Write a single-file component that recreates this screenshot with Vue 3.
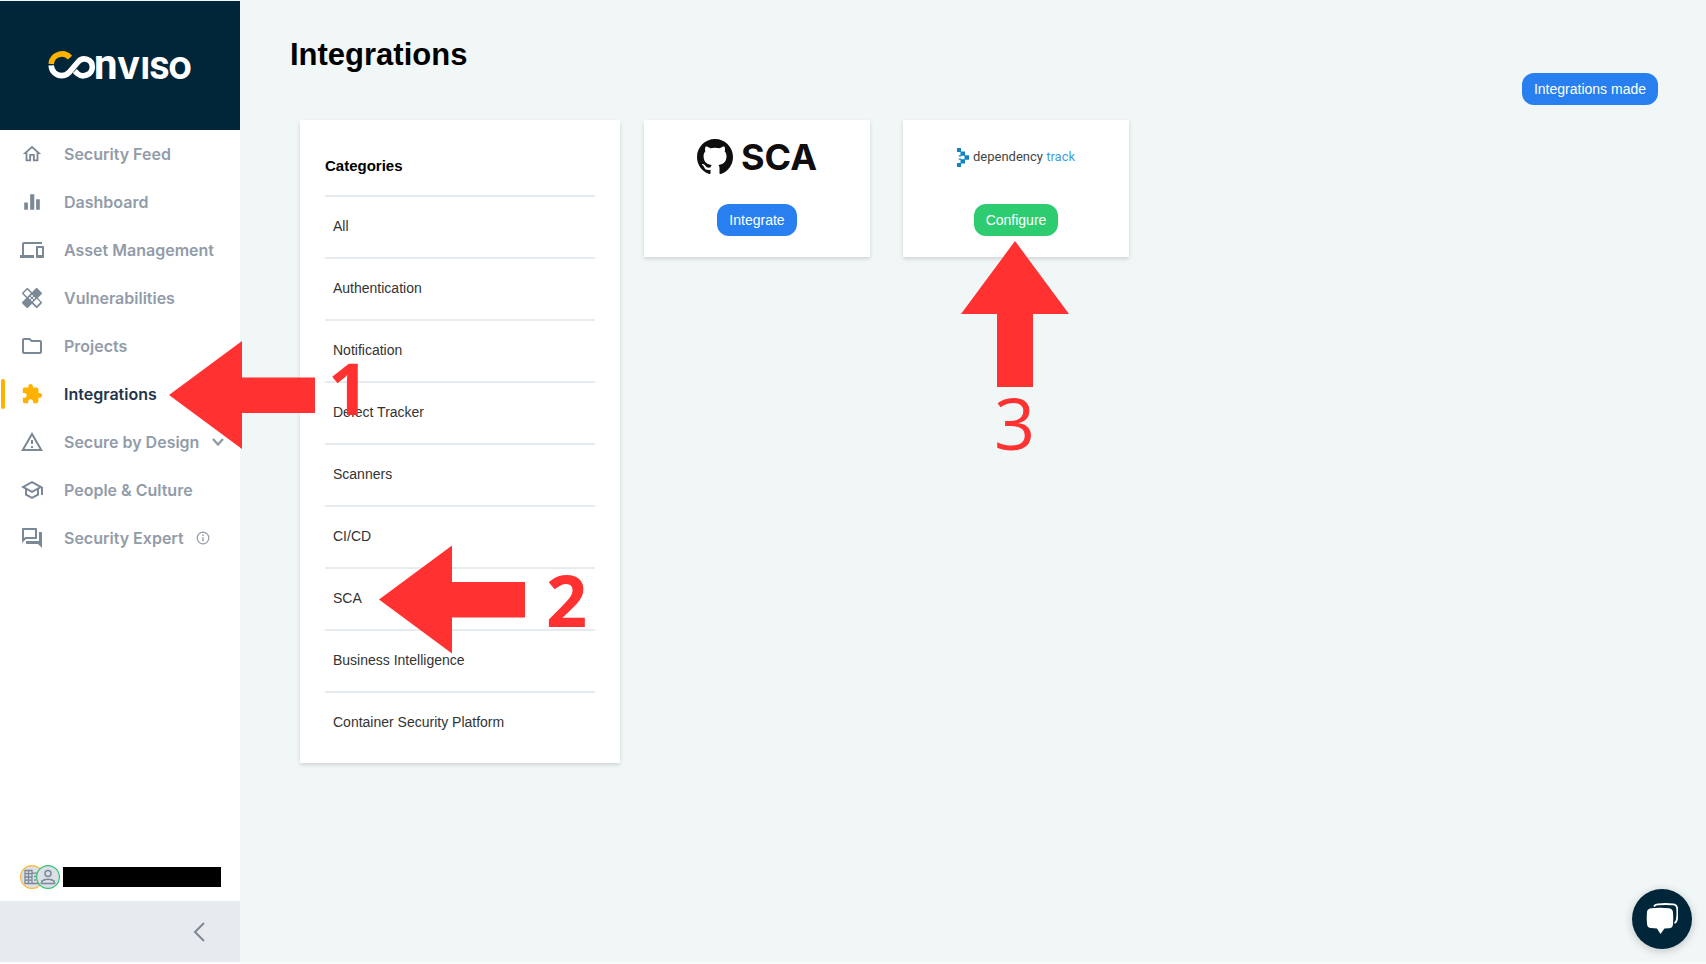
<script setup>
const navItems = [
  { label: 'Security Feed', icon: 'home' },
  { label: 'Dashboard', icon: 'chart' },
  { label: 'Asset Management', icon: 'devices' },
  { label: 'Vulnerabilities', icon: 'healing' },
  { label: 'Projects', icon: 'folder' },
  { label: 'Integrations', icon: 'puzzle', active: true },
  { label: 'Secure by Design', icon: 'warning', expandable: true },
  { label: 'People & Culture', icon: 'school' },
  { label: 'Security Expert', icon: 'forum', info: true },
]

const icons = {
  home: 'M12 5.69l5 4.5V18h-2v-6H9v6H7v-7.81l5-4.5M12 3L2 12h3v8h6v-6h2v6h6v-8h3L12 3z',
  chart: 'M3.5 12.5h4v8h-4zM10 3.5h4.500v17H10zM16.500 9h4v11.500h-4z',
  devices: 'M4 6h18V4H4c-1.100 0-2 .9-2 2v11H0v3h14v-3H4V6zm19 2h-6c-.55 0-1 .45-1 1v10c0 .55.45 1 1 1h6c.55 0 1-.45 1-1V9c0-.55-.45-1-1-1zm-1 9h-4v-7h4v7z',
  folder: 'M9.170 6l2 2H20v10H4V6h5.170M10 4H4c-1.100 0-1.990.9-1.990 2L2 18c0 1.100.9 2 2 2h16c1.100 0 2-.9 2-2V8c0-1.100-.9-2-2-2h-8l-2-2z',
  healing: 'M17.730 12.020l3.980-3.980c.39-.39.39-1.020 0-1.410l-4.340-4.340c-.39-.39-1.020-.39-1.410 0l-3.980 3.980L8 2.290C7.800 2.100 7.550 2 7.290 2c-.25 0-.51.1-.7.290L2.250 6.630c-.39.39-.39 1.020 0 1.410l3.980 3.980L2.250 16c-.39.39-.39 1.020 0 1.410l4.340 4.340c.39.39 1.020.39 1.410 0l3.980-3.980 3.980 3.980c.2.2.45.29.71.29.26 0 .51-.1.710-.29l4.340-4.340c.39-.39.39-1.020 0-1.410l-3.990-3.980zM12 9c.55 0 1 .45 1 1s-.45 1-1 1-1-.45-1-1 .45-1 1-1zm-4.710 1.960L3.660 7.340l3.630-3.630 3.620 3.620-3.620 3.630zM10 13c-.55 0-1-.45-1-1s.45-1 1-1 1 .45 1 1-.45 1-1 1zm2 2c-.55 0-1-.45-1-1s.45-1 1-1 1 .45 1 1-.45 1-1 1zm2-4c.55 0 1 .45 1 1s-.45 1-1 1-1-.45-1-1 .45-1 1-1z',
  puzzle: 'M20.500 11H19V7c0-1.100-.9-2-2-2h-4V3.500C13 2.120 11.880 1 10.500 1S8 2.120 8 3.500V5H4c-1.100 0-1.990.9-1.990 2v3.800H3.500c1.490 0 2.700 1.210 2.700 2.700s-1.210 2.700-2.700 2.700H2V20c0 1.100.9 2 2 2h3.800v-1.500c0-1.490 1.210-2.700 2.700-2.700 1.490 0 2.700 1.210 2.700 2.700V22H17c1.100 0 2-.9 2-2v-4h1.500c1.380 0 2.500-1.120 2.500-2.500S21.880 11 20.500 11z',
  warning: 'M12 5.990L19.530 19H4.470L12 5.990M12 2L1 21h22L12 2zm1 14h-2v2h2v-2zm0-6h-2v4h2v-4z',
  school: 'M12 3L1 9l4 2.180v6L12 21l7-3.820v-6l2-1.090V17h2V9L12 3zm6.820 6L12 12.720 5.180 9 12 5.280 18.820 9zM17 15.990l-5 2.730-5-2.730v-3.720L12 15l5-2.730v3.720z',
  forum: 'M15 4v7H5.170L4 12.170V4h11m1-2H3c-.55 0-1 .45-1 1v14l4-4h10c.55 0 1-.45 1-1V3c0-.55-.45-1-1-1zm5 4h-2v9H6v2c0 .55.45 1 1 1h11l4 4V7c0-.55-.45-1-1-1z',
}

const smallIcons = ['home', 'puzzle', 'chart']

const categories = [
  'All',
  'Authentication',
  'Notification',
  'Defect Tracker',
  'Scanners',
  'CI/CD',
  'SCA',
  'Business Intelligence',
  'Container Security Platform',
]
</script>

<template>
  <div class="app">
    <aside class="sidebar">
      <div class="brand">
        <svg class="brand-logo" viewBox="44 28 152 72" role="img" aria-label="Conviso">
          <path d="M51.200 64 A10.800 10.800 0 0 1 70 57.600" fill="none" stroke="#ffb100" stroke-width="5.600" />
          <path d="M51.200 65.300 C51.500 71.500 56 75.600 61.500 75.600 C65 75.600 67 74.600 69 72.500 L78 62 C83 56 92.300 59.500 92.300 67 C92.300 74.500 83 78.500 77.300 73.500 L74.800 71" fill="none" stroke="#fff" stroke-width="5.600" />
          <g fill="#fff">
            <text x="94" y="78.500" class="brand-n">n</text>
            <text x="117 141 149.500 168.500" y="78.500" class="brand-rest">VISO</text>
          </g>
        </svg>
      </div>

      <nav class="nav" aria-label="Main">
        <a
          v-for="item in navItems"
          :key="item.label"
          href="#"
          class="nav-item"
          :class="{ active: item.active }"
        >
          <span class="nav-icon">
            <svg viewBox="0 0 24 24" :class="{ small: smallIcons.includes(item.icon) }" aria-hidden="true">
              <path :d="icons[item.icon]" />
              <path v-if="item.icon === 'healing'" d="M16.700 12.700l3.600 3.600-3.600 3.700-3.700-3.700z" class="icon-hole" />
            </svg>
          </span>
          <span>{{ item.label }}</span>
          <svg v-if="item.expandable" class="nav-chevron" viewBox="0 0 14 10" aria-hidden="true">
            <path d="M2 2l5 5.500L12 2" fill="none" stroke="currentColor" stroke-width="2.400" />
          </svg>
          <svg v-if="item.info" class="nav-info" viewBox="0 0 14 14" aria-hidden="true">
            <circle cx="7" cy="7" r="5.800" fill="none" stroke="currentColor" stroke-width="1.200" />
            <path d="M6.300 6.200h1.400v4H6.300zM6.300 3.600h1.400V5H6.300z" />
          </svg>
        </a>
      </nav>

      <div class="account">
        <svg class="avatars" viewBox="0 0 40 24" aria-hidden="true">
          <circle cx="12" cy="12" r="11.400" fill="#dcdfe7" stroke="#ffb62e" stroke-width="1.200" />
          <path d="M5 5.500h7v2.700h6v10.300H5zM8.500 5.500v13M12 8v10.500M5 8.700h7M5 12h7M5 15.200h7M14 11.500h2M14 15h2" fill="none" stroke="#7b8896" stroke-width="1.300" />
          <circle cx="28" cy="12" r="11.400" fill="#dcdfe7" stroke="#2fc46c" stroke-width="1.200" />
          <circle cx="28" cy="8.500" r="3" fill="none" stroke="#7b8896" stroke-width="1.500" />
          <path d="M21.500 18.500v-1c0-2.200 4-3.300 6.500-3.300s6.500 1.100 6.500 3.300v1z" fill="none" stroke="#7b8896" stroke-width="1.500" />
        </svg>
        <span class="account-name"></span>
      </div>

      <div class="collapse-bar">
        <button type="button" class="collapse" aria-label="Collapse sidebar">
          <svg viewBox="0 0 12 20" aria-hidden="true">
            <path d="M11 1L2 10l9 9" fill="none" stroke="#7b8896" stroke-width="2" />
          </svg>
        </button>
      </div>
    </aside>

    <main class="main">
      <header class="header">
        <h1>Integrations</h1>
        <button type="button" class="btn">Integrations made</button>
      </header>

      <div class="content">
        <section class="card categories">
          <h2>Categories</h2>
          <ul>
            <li v-for="category in categories" :key="category">
              <a href="#">{{ category }}</a>
            </li>
          </ul>
        </section>

        <div class="integrations">
          <article class="card integration">
            <div class="logo">
              <svg class="github-mark" viewBox="0 0 16 16" aria-hidden="true">
                <path d="M8 0C3.580 0 0 3.580 0 8c0 3.540 2.290 6.530 5.470 7.590.4.070.55-.17.55-.38 0-.19-.01-.82-.01-1.490-2.010.37-2.530-.49-2.690-.94-.09-.23-.48-.94-.82-1.130-.28-.15-.68-.52-.01-.53.63-.01 1.080.58 1.230.82.72 1.210 1.870.87 2.330.66.070-.52.28-.87.510-1.070-1.780-.2-3.640-.89-3.640-3.950 0-.87.31-1.590.82-2.150-.08-.2-.36-1.020.08-2.120 0 0 .67-.21 2.200.82.64-.18 1.320-.27 2-.27s1.360.09 2 .27c1.530-1.040 2.200-.82 2.200-.82.44 1.100.16 1.920.08 2.120.51.56.82 1.270.82 2.150 0 3.070-1.870 3.750-3.650 3.950.29.25.54.73.54 1.480 0 1.070-.01 1.930-.01 2.200 0 .21.15.46.55.38A8.010 8.010 0 0 0 16 8c0-4.420-3.580-8-8-8z" fill="#100d0e" />
              </svg>
              <span class="sca">SCA</span>
            </div>
            <button type="button" class="btn">Integrate</button>
          </article>

          <article class="card integration">
            <div class="logo">
              <svg class="track-mark" viewBox="0 0 12 19" aria-hidden="true">
                <path d="M0 0h4v4H0zM3.500 3.500h4.500v4.300H3.500zM7.500 7.300h4.500v4.400H7.500zM3.500 11.200h4.500v4.300H3.500zM0 15h4v4H0zM1.800 7.300h2.400v1.200H1.800zM1.800 10.500h2.400v1.200H1.800z" fill="#0f83c4" />
              </svg>
              <span class="track">dependency <em>track</em></span>
            </div>
            <button type="button" class="btn success">Configure</button>
          </article>
        </div>
      </div>
    </main>

    <button type="button" class="chat" aria-label="Open chat">
      <svg viewBox="0 0 32 32" aria-hidden="true">
        <path d="M8 3.500C9 1.500 10 1.500 12 1.300c5-.4 10-.4 15 0 3 .2 4 1.700 4.200 4.200.3 4 .2 7-.2 10.500-.3 2-1 3.500-2.500 4.200" fill="none" stroke="#fff" stroke-width="1.800" />
        <path d="M5 5.200c6-.7 12-.7 18 0 2.500.3 3.800 1.600 4 4 .3 4 .3 8 0 12-.2 2.600-1.500 3.800-4 4l-4.500.2L14.500 31 11 25.400l-6-.3c-2.500-.2-3.700-1.400-4-4-.4-4-.4-8 0-12 .3-2.400 1.500-3.600 4-3.900z" fill="#fff" />
      </svg>
    </button>

    <svg class="annotations" viewBox="0 0 1100 700" aria-hidden="true">
      <path d="M169 395L242 341V377.500H315V413H242V449Z" />
      <path d="M379 599.500L452 545.500V582H525V617.500H452V653.500Z" />
      <path d="M1015 241L1069 314H1033V387H997V314H961Z" />
      <text x="328" y="415" class="bold">1</text>
      <text x="546" y="627" class="bold">2</text>
      <text x="994" y="450">3</text>
    </svg>
  </div>
</template>

<style>
body {
  margin: 0;
  background: #f1f6f7;
}
</style>

<style scoped>
* {
  box-sizing: border-box;
}

.app {
  position: relative;
  display: flex;
  min-height: 100vh;
  padding-top: 1px;
  border-bottom: 2px solid #fafbfb;
  overflow: hidden;
  background: #f1f6f7;
  font-family: "Liberation Sans", Arial, sans-serif;
}

.sidebar {
  display: flex;
  flex-direction: column;
  flex: 0 0 240px;
  background: #fff;
}

.brand {
  display: flex;
  align-items: flex-start;
  justify-content: center;
  height: 129px;
  padding-top: 27px;
  background: #022639;
}

.brand-logo {
  width: 152px;
  height: 72px;
}

.brand-n {
  font: 700 42px Roboto, sans-serif;
}

.brand-rest {
  font: 800 30px Inter, sans-serif;
}

.nav {
  display: flex;
  flex-direction: column;
  flex: 1;
}

.nav-item {
  position: relative;
  display: flex;
  align-items: center;
  height: 48px;
  padding-left: 20px;
  color: #929ca9;
  font: 600 16px/24px Inter, sans-serif;
  text-decoration: none;
}

.nav-icon {
  display: flex;
  align-items: center;
  justify-content: center;
  width: 24px;
  margin-right: 20px;
}

.nav-icon svg {
  width: 24px;
  height: 24px;
  fill: #7b8896;
}

.nav-icon svg.small {
  width: 22px;
  height: 22px;
}

.nav-icon .icon-hole {
  fill: #fff;
}

.nav-item.active {
  color: #24344a;
}

.nav-item.active .nav-icon svg {
  fill: #ffb100;
}

.nav-item.active::before {
  content: "";
  position: absolute;
  left: 1px;
  top: 9px;
  width: 4px;
  height: 30px;
  border-radius: 2px;
  background: #ffb100;
}

.nav-chevron {
  width: 14px;
  height: 10px;
  margin-left: 12px;
}

.nav-info {
  width: 14px;
  height: 14px;
  margin-left: 12px;
  fill: currentColor;
}

.account {
  display: flex;
  align-items: center;
  gap: 3px;
  padding: 0 19px 12px 20px;
}

.avatars {
  flex: none;
  width: 40px;
  height: 24px;
}

.account-name {
  flex: 1;
  height: 20px;
  background: #000;
}

.collapse-bar {
  display: flex;
  align-items: center;
  justify-content: flex-end;
  height: 61px;
  padding-right: 35px;
  background: #e7eaef;
}

.collapse {
  display: flex;
  padding: 0;
  border: 0;
  background: none;
}

.collapse svg {
  width: 12px;
  height: 20px;
}

.main {
  flex: 1;
  padding: 37px 48px 0 50px;
}

.header {
  display: flex;
  align-items: flex-start;
  justify-content: space-between;
  height: 82px;
}

h1 {
  margin: 0;
  color: #000;
  font-size: 31px;
  line-height: 34px;
}

.header .btn {
  margin-top: 35px;
}

.btn {
  height: 32px;
  padding: 0 12px;
  border: 0;
  border-radius: 12px;
  background: #287ff0;
  color: #fff;
  font: 14px/32px "Liberation Sans", Arial, sans-serif;
}

.btn.success {
  background: #2dcc70;
}

.content {
  display: flex;
  align-items: flex-start;
  gap: 24px;
  padding-left: 10px;
}

.card {
  background: #fff;
  box-shadow: 0 2px 4px rgba(0, 0, 0, 0.14);
}

.categories {
  flex: 0 0 320px;
  padding: 36px 25px 10px;
}

h2 {
  margin: 0;
  padding-bottom: 19px;
  color: #000;
  font-size: 15px;
  line-height: 20px;
}

ul {
  margin: 0;
  padding: 0;
  list-style: none;
}

li {
  padding: 0 8px 2px;
  border-top: 2px solid #e6ebef;
}

li a {
  display: block;
  color: #333;
  font-size: 14px;
  line-height: 58px;
  text-decoration: none;
}

.integrations {
  display: flex;
  flex-wrap: wrap;
  gap: 33px;
}

.integration {
  display: flex;
  flex-direction: column;
  align-items: center;
  width: 226px;
  height: 137px;
  padding-top: 17px;
}

.logo {
  display: flex;
  align-items: center;
  height: 40px;
  margin-bottom: 27px;
}

.github-mark {
  width: 36px;
  height: 36px;
  margin-right: 8px;
}

.sca {
  color: #100d0e;
  font: 700 36px/40px Inter, sans-serif;
}

.track-mark {
  width: 12px;
  height: 19px;
  margin-right: 4px;
}

.track {
  color: #444;
  font: 400 13px/20px Roboto, sans-serif;
}

.track em {
  color: #3f9fd8;
  font-style: normal;
}

.chat {
  position: absolute;
  right: 14px;
  bottom: 13px;
  display: flex;
  align-items: center;
  justify-content: center;
  width: 60px;
  height: 60px;
  padding: 0;
  border: 0;
  border-radius: 50%;
  background: #022639;
  box-shadow: 0 2px 10px rgba(0, 0, 0, 0.2);
}

.chat svg {
  width: 32px;
  height: 32px;
}

.annotations {
  position: absolute;
  left: 0;
  top: 0;
  width: 1100px;
  height: 700px;
  fill: #ff3131;
  font: 400 72px "Open Sans", sans-serif;
  pointer-events: none;
}

.annotations .bold {
  font-weight: 700;
}
</style>
